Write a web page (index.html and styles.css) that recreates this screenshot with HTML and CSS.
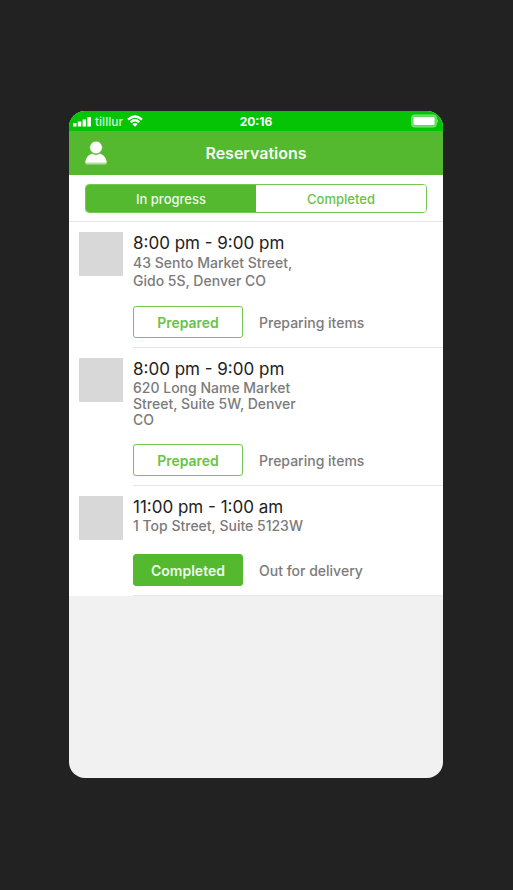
FILE: index.html
```html
<!DOCTYPE html>
<html lang="en">
<head>
<meta charset="utf-8">
<meta name="viewport" content="width=device-width, initial-scale=1">
<title>Reservations</title>
<link rel="stylesheet" href="styles.css">
</head>
<body>
<div class="phone">
  <div class="status">
    <div class="carrier">
      <svg width="18" height="11" viewBox="0 0 18 11" aria-hidden="true"><path fill="#fff" d="M0 7h3.500v3.500H0zM4.800 5.500h3.500v5H4.800zM9.600 3.500h3.500v7H9.600zM14.400 1h3.500v9.500h-3.500z"/></svg>
      <span>tilllur</span>
      <svg width="16" height="12" viewBox="0 0 16 12" fill="none" stroke="#fff" aria-hidden="true"><path stroke-width="2.200" d="M1 4.600Q8-1.600 15 4.600M3.500 7.300Q8 3.200 12.500 7.300"/><path fill="#fff" stroke="none" d="M5.300 9Q8 6.800 10.700 9L8 11.800z"/></svg>
    </div>
    <span class="clock">20:16</span>
    <svg class="battery" width="28" height="14" viewBox="0 0 28 14" aria-hidden="true"><rect x=".7" y="1" width="24.600" height="12" rx="2.500" fill="#5bdc5b" stroke="#7be47b"/><rect x="2.500" y="3" width="21" height="8" rx="1" fill="#fff"/><path fill="#7be47b" d="M26 5q2 2 0 4z"/></svg>
  </div>
  <header class="navbar">
    <button class="profile" type="button" aria-label="Profile">
      <svg width="22" height="24" viewBox="0 0 22 24" aria-hidden="true"><path fill="#b3dfa0" d="M.5 20h21v2.500q0 1-1 1h-19q-1 0-1-1z"/><path fill="#fff" d="M.3 21.500C.8 16.500 3 14.300 7 12.500q4 2.400 8 0c4 1.800 6.200 4 6.700 9z"/><circle cx="11" cy="6.500" r="6.400" fill="#fff" stroke="#54b92e" stroke-width=".8"/></svg>
    </button>
    <h1>Reservations</h1>
  </header>
  <nav class="filter">
    <div class="segments">
      <button class="segment active" type="button" aria-pressed="true">In progress</button>
      <button class="segment" type="button" aria-pressed="false">Completed</button>
    </div>
  </nav>
  <main>
    <article class="card">
      <div class="thumb"></div>
      <div class="body">
        <div class="info">
          <h2>8:00 pm - 9:00 pm</h2>
          <p class="address roomy">43 Sento Market Street, Gido 5S, Denver CO</p>
        </div>
        <div class="actions"><button class="action" type="button">Prepared</button><span>Preparing items</span></div>
      </div>
    </article>
    <article class="card">
      <div class="thumb"></div>
      <div class="body">
        <div class="info">
          <h2>8:00 pm - 9:00 pm</h2>
          <p class="address">620 Long Name Market Street, Suite 5W, Denver CO</p>
        </div>
        <div class="actions"><button class="action" type="button">Prepared</button><span>Preparing items</span></div>
      </div>
    </article>
    <article class="card">
      <div class="thumb"></div>
      <div class="body">
        <div class="info">
          <h2>11:00 pm - 1:00 am</h2>
          <p class="address">1 Top Street, Suite 5123W</p>
        </div>
        <div class="actions"><button class="action solid" type="button">Completed</button><span>Out for delivery</span></div>
      </div>
    </article>
  </main>
</div>
</body>
</html>
```
FILE: styles.css
```css
* {
  box-sizing: border-box;
}

body {
  margin: 0;
  min-height: 100vh;
  padding: 0 1px 1px 0;
  display: flex;
  align-items: center;
  justify-content: center;
  background: #222;
  color: #222;
  font-family: Inter, Roboto, sans-serif;
}

h1, h2, p {
  margin: 0;
}

button {
  margin: 0;
  padding: 0;
  font: inherit;
  cursor: pointer;
}

.phone {
  width: 100%;
  max-width: 374px;
  min-height: 667px;
  overflow: hidden;
  border-radius: 16px;
  background: #f1f1f1;
}

.status {
  display: grid;
  grid-template-columns: 1fr auto 1fr;
  align-items: center;
  height: 20px;
  padding: 0 4px;
  background: #05c405;
  color: #fff;
  font-size: 12px;
}

.carrier {
  display: flex;
  align-items: center;
  gap: 4px;
  color: #d2f6d2;
  font-weight: 500;
}

.clock {
  font-size: 12px;
  font-weight: 700;
}

.battery {
  justify-self: end;
}

.navbar {
  display: grid;
  grid-template-columns: 1fr auto 1fr;
  align-items: center;
  height: 44px;
  padding: 0 16px;
  background: #54b92e;
  color: #f5fbf2;
}

.navbar h1 {
  font-size: 16px;
  font-weight: 600;
}

.profile {
  display: flex;
  justify-self: start;
  border: 0;
  background: none;
}

.filter {
  padding: 9px 16px 8px;
  border-bottom: 1px solid #e6e6e6;
  background: #fff;
}

.segments {
  display: flex;
  height: 29px;
  overflow: hidden;
  border: 1px solid #74c755;
  border-radius: 4px;
}

.segment {
  flex: 1;
  border: 0;
  background: #fff;
  color: #68c348;
  font-size: 13px;
  font-weight: 500;
}

.segment.active {
  background: #54b92e;
  color: #eef8ea;
}

.card {
  display: flex;
  gap: 10px;
  padding: 10px 0 0 10px;
  background: #fff;
}

.thumb {
  flex: none;
  width: 44px;
  height: 44px;
  background: #d8d8d8;
}

.body {
  flex: 1;
  padding-bottom: 9px;
  border-bottom: 1px solid #e6e6e6;
}

.info {
  min-height: 42px;
}

.info h2 {
  font-size: 17px;
  font-weight: 400;
  line-height: 22px;
}

.address {
  max-width: 184px;
  color: #7b7b7b;
  font-size: 14px;
  font-weight: 500;
  line-height: 16px;
}

.address.roomy {
  line-height: 18px;
}

.actions {
  display: flex;
  align-items: center;
  gap: 16px;
  margin-top: 16px;
  color: #7b7b7b;
  font-size: 14px;
  font-weight: 500;
}

.action {
  width: 110px;
  height: 32px;
  border: 1px solid #74c755;
  border-radius: 3px;
  background: #fff;
  color: #68c348;
  font-weight: 600;
}

.action.solid {
  border-color: #54b92e;
  background: #54b92e;
  color: #eef8ea;
}
```
